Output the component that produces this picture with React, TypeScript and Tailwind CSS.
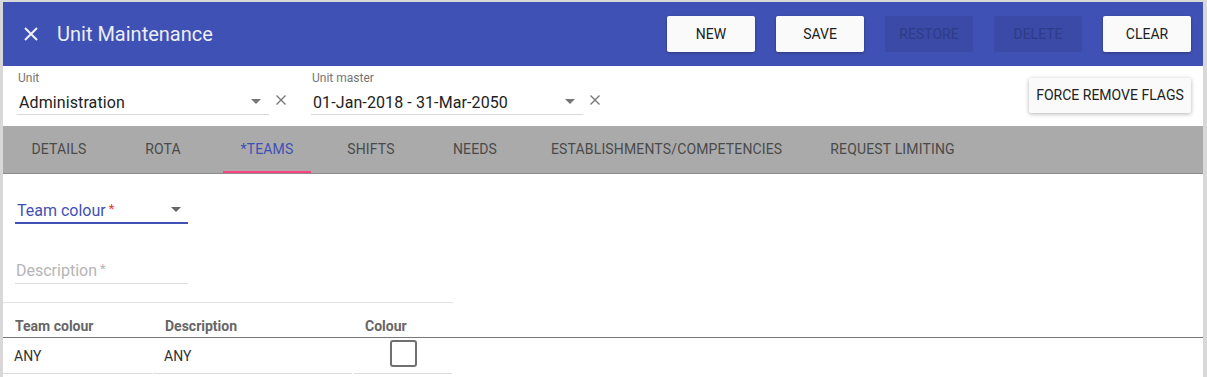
import React from 'react';

const font = { fontFamily: 'Roboto, "Liberation Sans", sans-serif' };

const Caret: React.FC<{ color?: string }> = ({ color = 'border-t-[#757575]' }) => (
  <span className={`inline-block w-0 h-0 border-l-[5px] border-r-[5px] border-t-[5px] border-l-transparent border-r-transparent ${color}`} />
);

const ClearIcon: React.FC = () => (
  <svg width="12" height="12" viewBox="0 0 12 12" className="text-[#757575]">
    <path d="M1.5 1.5 L10.5 10.5 M10.5 1.5 L1.5 10.5" stroke="currentColor" strokeWidth="1.3" />
  </svg>
);

interface SelectFieldProps {
  label: string;
  value: string;
  width: string;
}

const SelectField: React.FC<SelectFieldProps> = ({ label, value, width }) => (
  <div className="flex items-end">
    <div className={`${width} pt-[5px]`}>
      <div className="h-[14px] text-[12px] leading-[14px] text-[#757575] pl-[1px]">{label}</div>
      <div className="mt-[3px] h-[27px] flex items-center justify-between border-b border-[#d9d9d9] pl-[2px] pr-[8px]">
        <span className="text-[16px] text-[#222] pt-[3px] tracking-[0.1px]">{value}</span>
        <Caret />
      </div>
    </div>
    <div className="w-[22px] h-[28px] ml-[1px] flex items-center justify-center pb-[3px]">
      <ClearIcon />
    </div>
  </div>
);

const tabs = ['Details', 'Rota', '*Teams', 'Shifts', 'Needs', 'Establishments/Competencies', 'Request limiting'];

const HeaderButton: React.FC<{ label: string; disabled?: boolean }> = ({ label, disabled }) => (
  <button
    className={`w-[88px] h-[36px] rounded-[2px] text-[14px] uppercase ${
      disabled
        ? 'bg-[#3a4aa6] text-[#2f3c88]'
        : 'bg-[#fafafa] text-[#212121] shadow-[0_1px_3px_rgba(0,0,0,0.3)]'
    }`}
  >
    {label}
  </button>
);

export default function App() {
  return (
    <div className="w-[1207px] h-[377px] overflow-hidden bg-[#d8d8d8] pl-[3px] pr-[4px] pt-[2px]" style={font}>
      <div className="bg-white h-[400px] flex flex-col">
        {/* top bar */}
        <div className="h-[64px] bg-[#3f51b5] flex items-center pl-[21px] pr-[12px] shrink-0">
          <svg width="14" height="14" viewBox="0 0 14 14" className="text-[#eef0fa]">
            <path d="M1 1 L13 13 M13 1 L1 13" stroke="currentColor" strokeWidth="2" />
          </svg>
          <span className="ml-[19px] text-[20px] text-[#eceef8]">Unit Maintenance</span>
          <div className="ml-auto flex gap-[21px]">
            <HeaderButton label="New" />
            <HeaderButton label="Save" />
            <HeaderButton label="Restore" disabled />
            <HeaderButton label="Delete" disabled />
            <HeaderButton label="Clear" />
          </div>
        </div>

        {/* unit selectors */}
        <div className="h-[60px] flex items-start pl-[14px] pr-[12px] shrink-0">
          <SelectField label="Unit" value="Administration" width="w-[252px]" />
          <div className="ml-[19px]">
            <SelectField label="Unit master" value="01-Jan-2018 - 31-Mar-2050" width="w-[272px]" />
          </div>
          <button className="ml-auto mt-[12px] w-[162px] h-[35px] rounded-[2px] bg-[#fafafa] text-[14px] text-[#212121] uppercase shadow-[0_1px_4px_rgba(0,0,0,0.3)]">
            Force remove flags
          </button>
        </div>

        {/* tabs */}
        <div className="h-[48px] bg-[#aaaaaa] border-b border-[#8c8c8c] flex pl-[4px] shrink-0">
          {tabs.map((t) => {
            const active = t === '*Teams';
            return (
              <div
                key={t}
                className={`relative min-w-[104px] px-6 flex items-center justify-center text-[14px] uppercase tracking-[0.15px] ${
                  active ? 'text-[#3f51b5]' : 'text-[#4a4a4a]'
                }`}
              >
                {t}
                {active && <span className="absolute left-[8px] right-[8px] bottom-0 h-[2px] bg-[#ff4081]" />}
              </div>
            );
          })}
        </div>

        {/* form */}
        <div className="pl-[12px]">
          <div className="w-[173px] mt-[22px]">
            <div className="h-[26px] flex items-center justify-between pl-[2px] pr-[7px]">
              <span className="text-[16px] text-[#3f51b5] pt-[3px]">
                Team colour<span className="text-[#e53935] text-[13px] align-top ml-[3px]">*</span>
              </span>
              <Caret color="border-t-[#666]" />
            </div>
            <div className="h-[2px] bg-[#3f51b5]" />
          </div>
          <div className="w-[173px] mt-[33px]">
            <div className="h-[26px] flex items-center pl-[1px]">
              <span className="text-[16px] text-[#b5b5b5] pt-[2px]">
                Description<span className="text-[13px] align-top ml-[3px]">*</span>
              </span>
            </div>
            <div className="h-px bg-[#dedede]" />
          </div>
        </div>

        {/* table */}
        <div className="mt-[18px] w-[450px] h-px bg-[#e3e3e3]" />
        <div className="h-[35px] flex items-end border-b border-[#777] text-[14px] font-bold text-[#666] pb-[1px]">
          <div className="w-[149px] mr-[1px] pl-[12px] leading-[20px]">Team colour</div>
          <div className="w-[199px] mr-[2px] pl-[12px] leading-[20px]">Description</div>
          <div className="w-[98px] pl-[11px] leading-[20px]">Colour</div>
        </div>
        <div className="flex h-[36px] text-[14px] text-[#333]">
          <div className="w-[149px] mr-[1px] pl-[11px] pt-[2px] flex items-center border-b border-[#dcdcdc]">ANY</div>
          <div className="w-[199px] mr-[2px] pl-[11px] pt-[2px] flex items-center border-b border-[#dcdcdc]">ANY</div>
          <div className="w-[98px] flex items-center justify-center border-b border-[#dcdcdc]">
            <div className="w-[27px] h-[27px] mb-[4px] border-2 border-[#707070] rounded-[3px]" />
          </div>
        </div>
      </div>
    </div>
  );
}
